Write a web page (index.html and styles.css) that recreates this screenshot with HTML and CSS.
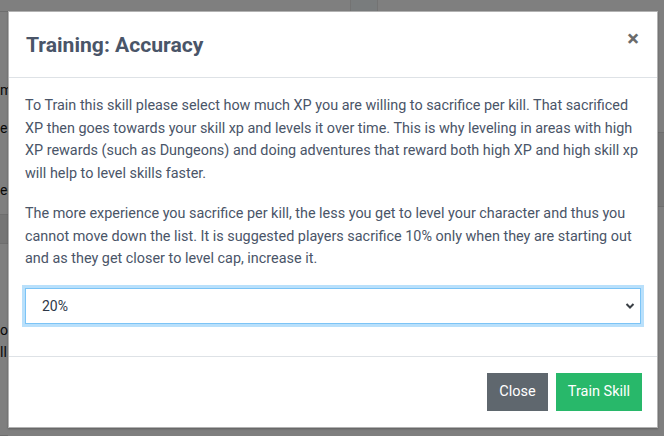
FILE: index.html
```html
<!DOCTYPE html>
<html>
<head>
<meta charset="utf-8">
<link rel="stylesheet" href="styles.css">
</head>
<body>
<div class="page">
  <div class="topbar">
    <div class="topbar-left"></div>
    <div class="topbar-mid"></div>
    <div class="topbar-right"></div>
  </div>
  <div class="content">
    <div class="col-left">
      <div class="frag f1">m</div>
      <div class="frag f2">e</div>
      <div class="frag f3">ec</div>
      <div class="band"></div>
      <div class="frag f4">ou</div>
      <div class="frag f5">ll</div>
    </div>
    <div class="col-main"></div>
    <div class="col-right">
      <div class="rband"></div>
    </div>
  </div>
</div>
<div class="backdrop"></div>
<div class="modal">
  <div class="modal-header">
    <h5 class="modal-title">Training: Accuracy</h5>
    <span class="close">×</span>
  </div>
  <div class="modal-body">
    <p>To Train this skill please select how much XP you are willing to sacrifice per kill. That sacrificed XP then goes towards your skill xp and levels it over time. This is why leveling in areas with high XP rewards (such as Dungeons) and doing adventures that reward both high XP and high skill xp will help to level skills faster.</p>
    <p>The more experience you sacrifice per kill, the less you get to level your character and thus you cannot move down the list. It is suggested players sacrifice 10% only when they are starting out and as they get closer to level cap, increase it.</p>
    <div class="form-group">
      <div class="select">
        <span>20%</span>
        <svg class="chev" width="10" height="8" viewBox="0 0 10 8"><path d="M1.5 2 L5 5.5 L8.5 2" fill="none" stroke="#3a3f45" stroke-width="2"/></svg>
      </div>
    </div>
  </div>
  <div class="modal-footer">
    <button class="btn btn-close">Close</button>
    <button class="btn btn-train">Train Skill</button>
  </div>
</div>
</body>
</html>
```
FILE: styles.css
```css
* { box-sizing: border-box; }
html, body { margin: 0; padding: 0; }
body {
  width: 664px;
  height: 436px;
  overflow: hidden;
  font-family: Roboto, "Liberation Sans", sans-serif;
  background: #fff;
  position: relative;
}
.page { width: 664px; height: 436px; display: flex; flex-direction: column; }
.topbar { height: 12px; display: flex; }
.topbar-left { width: 330px; border-bottom: 1px solid #ddd; }
.topbar-mid { width: 20px; }
.topbar-right { width: 28px; background: #f2f8fa; border-left: 1px solid #e6e6e6; border-right: 1px solid #e6e6e6; }
.content { flex: 1; display: flex; }
.col-left {
  width: 8px;
  display: flex;
  flex-direction: column;
  align-items: flex-start;
  border-bottom: 1px solid #ddd;
  font-size: 14px;
  color: #111;
}
.frag { white-space: nowrap; line-height: 16px; }
.f1 { margin-top: 70px; }
.f2 { margin-top: 22px; }
.f3 { margin-top: 46px; }
.band { align-self: stretch; height: 30px; margin-top: 16px; background: #eaeaea; border-top: 1px solid #ddd; border-bottom: 1px solid #ddd; }
.f4 { margin-top: 78px; }
.f5 { margin-top: 6px; }
.col-main { flex: 1; }
.col-right { width: 10px; display: flex; flex-direction: column; }
.rband { margin-top: 120px; height: 75px; background: #eee; border-top: 1px solid #ddd; border-bottom: 1px solid #ddd; }

.backdrop {
  position: absolute;
  inset: 0;
  background: rgba(0, 0, 0, 0.5);
}

.modal {
  position: absolute;
  left: 8px;
  top: 11px;
  width: 650px;
  height: 417px;
  background: #fff;
  border: 1px solid rgba(0, 0, 0, 0.3);
  box-shadow: 0 1px 2px rgba(0,0,0,0.25);
  display: flex;
  flex-direction: column;
  color: #4a5568;
}
.modal-header {
  height: 66px;
  flex: none;
  padding: 0 16px 0 17px;
  display: flex;
  align-items: center;
  justify-content: space-between;
  border-bottom: 1px solid #dee2e6;
}
.modal-title {
  margin: 0;
  font-size: 21.1px;
  font-weight: 700;
  color: #4a5568;
}
.close {
  font-size: 22px;
  font-weight: 700;
  color: #6b6b6b;
  line-height: 1;
  margin-top: -12px;
  margin-right: 2px;
}
.modal-body {
  padding: 17px 16px 16px 16px;
  font-size: 14.4px;
  line-height: 22.7px;
  flex: none;
}
.modal-body p { margin: 0 0 17px 0; }
.form-group { margin-bottom: 16px; }
.select {
  height: 36px;
  border: 1px solid #7cc4f6;
  box-shadow: 0 0 0 3px #b9e0fb;
  display: flex;
  align-items: center;
  justify-content: space-between;
  padding: 0 5px 0 16px;
  font-size: 14px;
  color: #2d3748;
}
.chev { margin-top: 1px; }
.modal-footer {
  flex: 1;
  border-top: 1px solid #dee2e6;
  display: flex;
  justify-content: flex-end;
  align-items: flex-start;
  gap: 8px;
  padding: 16px 15px 0 0;
}
.btn {
  font-family: Roboto, "Liberation Sans", sans-serif;
  font-size: 14.5px;
  line-height: 20px;
  padding: 8px 0;
  text-align: center;
  border: 1px solid transparent;
  color: #fff;
  border-radius: 0;
}
.btn-close { background: #5f676e; width: 61px; }
.btn-train { background: #28b86a; width: 86px; }
```
